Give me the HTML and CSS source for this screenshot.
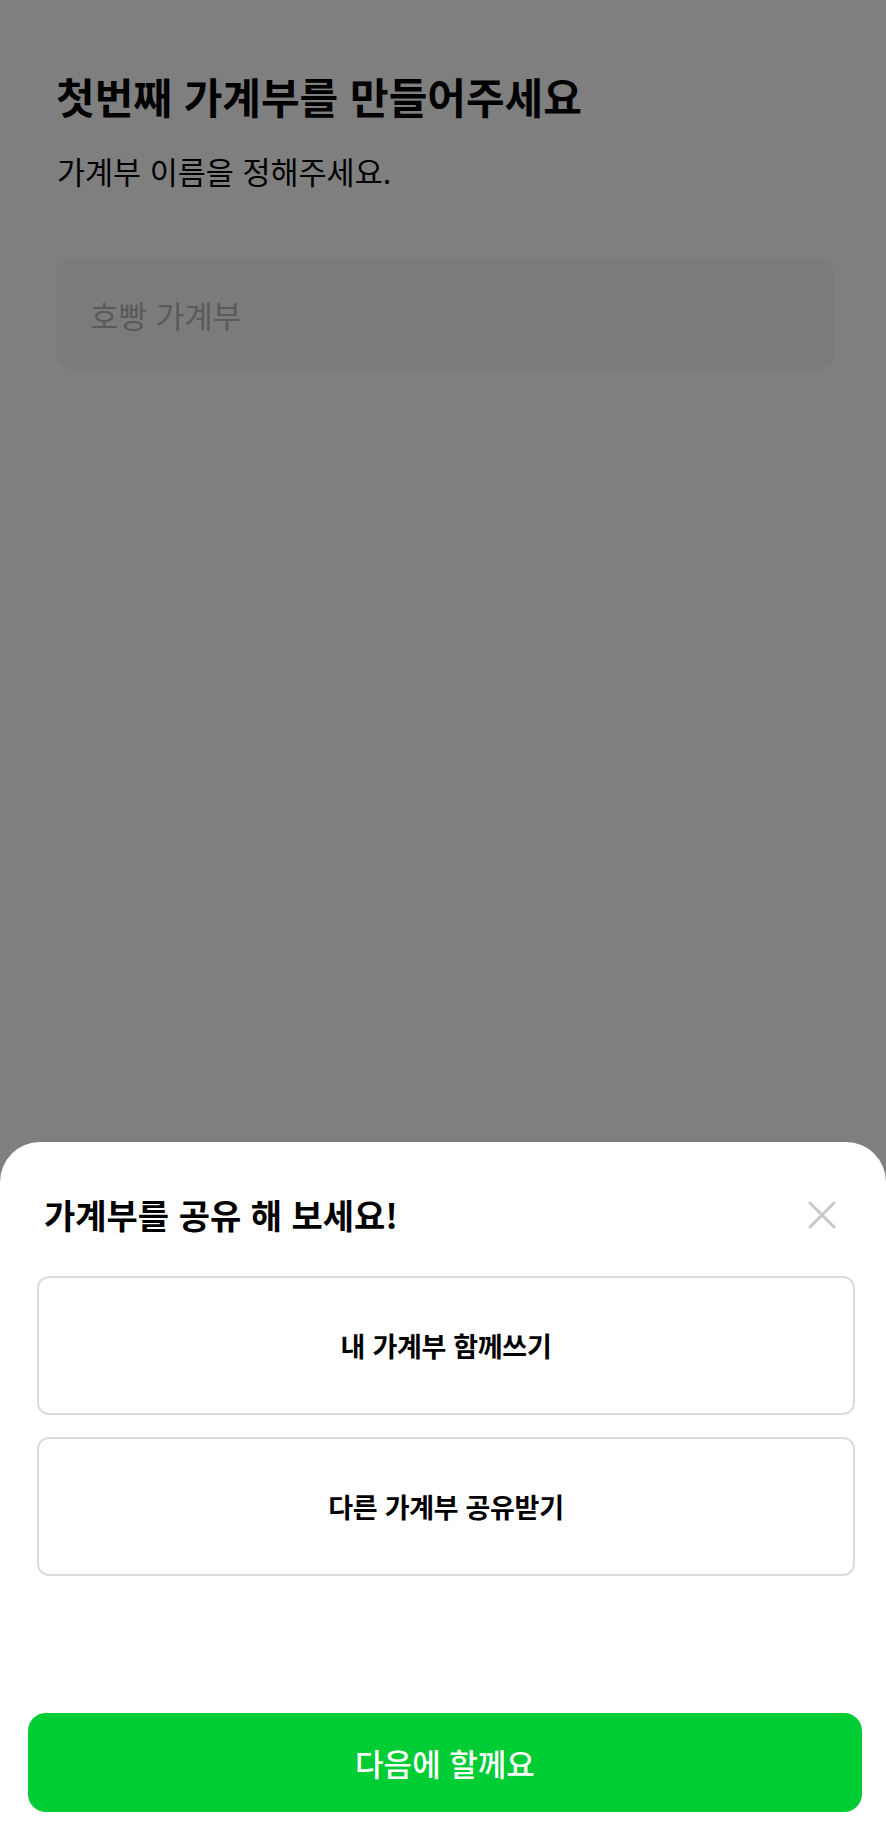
FILE: index.html
```html
<!DOCTYPE html>
<html lang="ko">
<head>
	<meta charset="utf-8">
	<title>첫번째 가계부</title>
	<link rel="stylesheet" href="styles.css">
</head>
<body>
	<div class="page">
		<h1 class="title">첫번째 가계부를 만들어주세요</h1>
		<p class="desc">가계부 이름을 정해주세요.</p>
		<input class="name-input" type="text" placeholder="호빵 가계부">
	</div>

	<!-- dim layer behind the sheet -->
	<div class="dim"></div>

	<div class="sheet">
		<div class="sheet-head">
			<h2 class="sheet-title">가계부를 공유 해 보세요!</h2>
			<button class="close-btn" aria-label="닫기">
				<svg width="28" height="28" viewBox="0 0 28 28">
					<path d="M2 2 L26 26 M26 2 L2 26" stroke="#c8c8c8" stroke-width="3" stroke-linecap="round" fill="none"/>
				</svg>
			</button>
		</div>
		<div class="options">
			<button class="option">내 가계부 함께쓰기</button>
			<button class="option">다른 가계부 공유받기</button>
		</div>
		<button class="later-btn">다음에 할께요</button>
	</div>
</body>
</html>
```

FILE: styles.css
```css
html, body {
	margin: 0;
	height: 100%;
	background: #fff;
	font-family: "Noto Sans CJK KR", "Noto Sans", sans-serif;
	color: #000;
}
.page {
	padding: 68px 52px 0 56px;
}
.title {
	margin: 0;
	font-size: 42px;
	font-weight: 700;
	line-height: 56px;
}
.desc {
	margin: 27px 0 0 1px;
	font-size: 30.5px;
	line-height: 40px;
}
.name-input {
	display: block;
	box-sizing: border-box;
	width: 778px;
	height: 112px;
	margin-top: 67px;
	padding: 0 34px;
	border: none;
	border-radius: 16px;
	background: #f7f7f7;
	font-family: inherit;
	font-size: 31px;
	color: #000;
	outline: none;
}
.name-input::placeholder {
	color: #b5b5b5;
}
.dim {
	position: fixed;
	inset: 0;
	background: rgba(0, 0, 0, 0.5);
}
.sheet {
	position: fixed;
	left: 0;
	right: 0;
	bottom: 0;
	height: 682px;
	box-sizing: border-box;
	background: #fff;
	border-radius: 40px 40px 0 0;
	display: flex;
	flex-direction: column;
	padding: 0 24px 12px 28px;
}
.sheet-head {
	display: flex;
	align-items: center;
	justify-content: space-between;
	margin-top: 51px;
	padding: 0 26px 0 16px;
}
.sheet-title {
	margin: 0;
	font-size: 34px;
	font-weight: 700;
	line-height: 44px;
}
.close-btn {
	padding: 0;
	border: none;
	background: none;
	width: 28px;
	height: 28px;
	cursor: pointer;
}
.close-btn svg {
	display: block;
}
.options {
	display: flex;
	flex-direction: column;
	gap: 22px;
	margin-top: 39px;
	padding: 0 7px 0 9px;
}
.option {
	height: 139px;
	border: 2px solid #dcdcdc;
	border-radius: 12px;
	background: #fff;
	font-family: inherit;
	font-size: 27px;
	font-weight: 600;
	color: #000;
	letter-spacing: -0.3px;
	cursor: pointer;
}
.later-btn {
	margin-top: auto;
	height: 99px;
	border: none;
	border-radius: 18px;
	background: #00cc33;
	color: #fff;
	font-family: inherit;
	font-size: 31px;
	font-weight: 500;
	cursor: pointer;
}
```
